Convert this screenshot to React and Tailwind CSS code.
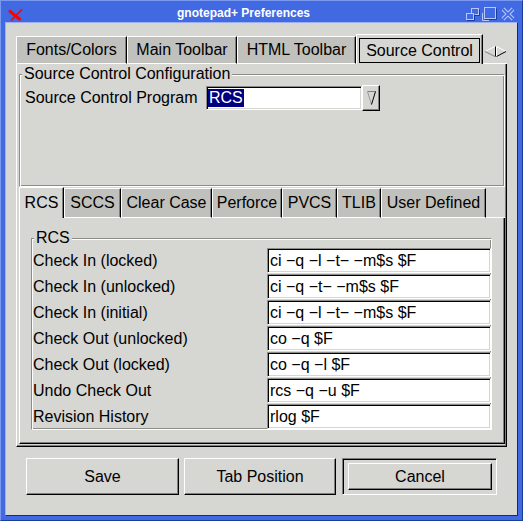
import React from "react";

function InactiveTab({ label, className }) {
  return (
    <div
      className={`${className} shrink-0 bg-[#c0c0bc] border border-t-white border-l-white border-r-black border-b-white shadow-[inset_-1px_0_0_#7f7f7f] flex items-center justify-center whitespace-nowrap`}
    >
      {label}
    </div>
  );
}

function Entry({ value }) {
  return (
    <div className="w-[224px] h-full shrink-0 bg-white border border-t-[#8c8c88] border-l-[#8c8c88] border-r-white border-b-white shadow-[inset_1px_1px_0_#000,inset_-1px_-1px_0_#d6d6d2] flex items-center pl-[2px] whitespace-nowrap">
      {value}
    </div>
  );
}

const rows = [
  ["Check In (locked)", "ci −q −l −t− −m$s $F"],
  ["Check In (unlocked)", "ci −q −t− −m$s $F"],
  ["Check In (initial)", "ci −q −l −t− −m$s $F"],
  ["Check Out (unlocked)", "co −q $F"],
  ["Check Out (locked)", "co −q −l $F"],
  ["Undo Check Out", "rcs −q −u $F"],
  ["Revision History", "rlog $F"],
];

function RedX() {
  return (
    <svg className="ml-[7px] mt-[8px] shrink-0" width="15" height="12" viewBox="0 0 15 12">
      <path d="M1 1.5 L12.5 11" stroke="#ff0000" strokeWidth="3" fill="none" />
      <path d="M14 0.5 L3 11.5" stroke="#ff0000" strokeWidth="1.6" fill="none" />
    </svg>
  );
}

function TitleButtons() {
  return (
    <svg className="mt-[5px] mr-[6px] shrink-0" width="52" height="16" viewBox="465 6 52 16">
      <rect x="472.5" y="8.5" width="7" height="6" fill="none" stroke="#b8c8ff" />
      <path d="M480.5 9.5v6H474" stroke="#1c3c9c" fill="none" />
      <rect x="467.5" y="13.5" width="7" height="6" fill="#4169e1" stroke="#b8c8ff" />
      <path d="M475.5 14.5v6H468" stroke="#1c3c9c" fill="none" />
      <path d="M483.5 13v7.5H490" stroke="#b8c8ff" fill="none" />
      <rect x="485.5" y="7.5" width="11" height="11" fill="#4169e1" stroke="#b8c8ff" />
      <path d="M497.5 8.5v11H486" stroke="#1c3c9c" fill="none" />
      <path d="M504 9 L514 19 M514 9 L504 19" stroke="#b8c8ff" strokeWidth="4" fill="none" />
      <path d="M504 9 L514 19 M514 9 L504 19" stroke="#4169e1" strokeWidth="1.8" fill="none" />
    </svg>
  );
}

function TabArrows() {
  return (
    <svg width="23" height="11" viewBox="0 0 23 11">
      <path d="M1 5.5 L11 0.5" stroke="#ffffff" fill="none" />
      <path d="M1 5.5 L11 10.5" stroke="#7f7f7f" fill="none" />
      <path d="M11.5 0.5 V10.5" stroke="#000000" fill="none" />
      <path d="M12.5 0.5 V10.5" stroke="#ffffff" fill="none" />
      <path d="M12.5 0.5 L22 5.5" stroke="#ffffff" fill="none" />
      <path d="M12.5 10.5 L22 5.5" stroke="#000000" fill="none" />
    </svg>
  );
}

function ComboArrow() {
  return (
    <svg width="9" height="14" viewBox="0 0 9 14">
      <path d="M0.5 0.5 H8.5" stroke="#7f7f7f" fill="none" />
      <path d="M0.5 0.5 L4.5 13.5" stroke="#9a9a96" fill="none" />
      <path d="M8.5 0.5 L4.5 13.5" stroke="#000000" fill="none" />
    </svg>
  );
}

export default function App() {
  return (
    <div className="w-[523px] h-[521px] bg-[#4169e1] border border-t-[#7a98f0] border-l-[#7a98f0] border-r-[#1c3c9c] border-b-[#1c3c9c] flex flex-col font-['Liberation_Sans',Arial,sans-serif] text-[16px] leading-[18px] text-black overflow-hidden select-none">
      {/* title bar */}
      <div className="h-[21px] shrink-0 flex items-start">
        <RedX />
        <div className="flex-1 text-center text-white font-bold text-[12px] leading-[14px] pt-[5px] whitespace-nowrap">
          gnotepad+ Preferences
        </div>
        <TitleButtons />
      </div>

      {/* client area */}
      <div className="mx-[4px] mb-[4px] flex-1 bg-[#d6d6d2] border border-t-[#9cb0f0] border-l-[#9cb0f0] border-r-[#102a80] border-b-[#102a80] flex flex-col px-[10px] pt-[11px]">
        {/* outer notebook */}
        <div className="flex flex-col w-[491px] h-[413px] shrink-0">
          <div className="h-[30px] flex items-end shrink-0">
            <InactiveTab label="Fonts/Colors" className="w-[111px] h-[28px]" />
            <InactiveTab label="Main Toolbar" className="w-[110px] h-[28px]" />
            <InactiveTab label="HTML Toolbar" className="w-[119px] h-[28px]" />
            <div className="w-[127px] h-[30px] shrink-0 bg-[#d6d6d2] border-t border-l border-r border-t-white border-l-white border-r-black shadow-[inset_-1px_0_0_#7f7f7f] flex pt-[3px] px-[2px] pb-[1px]">
              <div className="flex-1 border border-black flex items-center justify-center whitespace-nowrap">
                Source Control
              </div>
            </div>
            <div className="flex-1 self-stretch border-b border-b-white pt-[12px] pl-[1px]">
              <TabArrows />
            </div>
          </div>

          {/* outer page */}
          <div className="h-[383px] shrink-0 flex flex-col border-l border-r border-b border-l-white border-r-black border-b-black shadow-[inset_-1px_-1px_0_#7f7f7f] pl-[2px] pt-[1px]">
            {/* Source Control Configuration frame */}
            <fieldset className="w-[486px] h-[122px] shrink-0 border border-t-[#8c8c88] border-l-[#8c8c88] border-r-white border-b-white shadow-[inset_1px_1px_0_#fff,inset_-1px_-1px_0_#8c8c88]">
              <legend className="ml-[2px] px-[2px] bg-[#d6d6d2] leading-[18px] whitespace-nowrap">
                Source Control Configuration
              </legend>
              <div className="flex items-center pl-[5px] mt-[2px] h-[26px]">
                <div className="w-[181px] shrink-0 whitespace-nowrap">Source Control Program</div>
                <div className="w-[156px] h-[24px] shrink-0 bg-white border border-t-[#8c8c88] border-l-[#8c8c88] border-r-white border-b-white shadow-[inset_1px_1px_0_#000,inset_-1px_-1px_0_#d6d6d2] flex items-center pl-[1px]">
                  <span className="bg-[#000080] text-white px-[1px] leading-[18px]">RCS</span>
                </div>
                <div className="w-[18px] h-[26px] shrink-0 bg-[#d6d6d2] border border-t-white border-l-white border-r-black border-b-black shadow-[inset_-1px_-1px_0_#7f7f7f] flex items-center justify-center">
                  <ComboArrow />
                </div>
              </div>
            </fieldset>

            {/* inner notebook */}
            <div className="w-[486px] h-[257px] shrink-0 flex flex-col">
              <div className="h-[31px] flex items-end shrink-0">
                <div className="w-[45px] h-[31px] shrink-0 bg-[#d6d6d2] border-t border-l border-r border-t-white border-l-white border-r-black shadow-[inset_-1px_0_0_#7f7f7f] flex items-center justify-center">
                  RCS
                </div>
                <InactiveTab label="SCCS" className="w-[57px] h-[30px]" />
                <InactiveTab label="Clear Case" className="w-[91px] h-[30px]" />
                <InactiveTab label="Perforce" className="w-[70px] h-[30px]" />
                <InactiveTab label="PVCS" className="w-[55px] h-[30px]" />
                <InactiveTab label="TLIB" className="w-[44px] h-[30px]" />
                <InactiveTab label="User Defined" className="w-[105px] h-[30px]" />
                <div className="flex-1 self-stretch border-b border-b-white" />
              </div>

              <div className="h-[226px] shrink-0 border-l border-r border-b border-l-white border-r-black border-b-black shadow-[inset_-1px_-1px_0_#7f7f7f] pl-[11px] pt-[11px]">
                <fieldset className="w-[461px] border border-t-[#8c8c88] border-l-[#8c8c88] border-r-white border-b-white shadow-[inset_1px_1px_0_#fff,inset_-1px_-1px_0_#8c8c88]">
                  <legend className="ml-[2px] px-[2px] bg-[#d6d6d2] leading-[18px]">RCS</legend>
                  <div className="flex flex-col gap-[1px] pt-[1px]">
                    {rows.map(([label, value]) => (
                      <div key={label} className="flex h-[25px] items-center">
                        <div className="flex-1 pl-[1px] whitespace-nowrap">{label}</div>
                        <Entry value={value} />
                      </div>
                    ))}
                  </div>
                </fieldset>
              </div>
            </div>
          </div>
        </div>

        {/* buttons */}
        <div className="flex h-[37px] mt-[11px] pl-[10px] shrink-0">
          <div className="w-[153px] h-full shrink-0 bg-[#d6d6d2] border border-t-white border-l-white border-r-black border-b-black shadow-[inset_-1px_-1px_0_#7f7f7f] flex items-center justify-center">
            Save
          </div>
          <div className="w-[152px] h-full ml-[5px] shrink-0 bg-[#d6d6d2] border border-t-white border-l-white border-r-black border-b-black shadow-[inset_-1px_-1px_0_#7f7f7f] flex items-center justify-center">
            Tab Position
          </div>
          <div className="w-[155px] h-full ml-[6px] shrink-0 border border-t-[#7f7f7f] border-l-[#7f7f7f] border-r-white border-b-white shadow-[inset_1px_1px_0_#000] flex pt-[4px] pb-[4px] pl-[5px] pr-[4px]">
            <div className="flex-1 bg-[#d6d6d2] border border-t-white border-l-white border-r-black border-b-black shadow-[inset_-1px_-1px_0_#7f7f7f] flex items-center justify-center">
              Cancel
            </div>
          </div>
        </div>
      </div>
    </div>
  );
}
